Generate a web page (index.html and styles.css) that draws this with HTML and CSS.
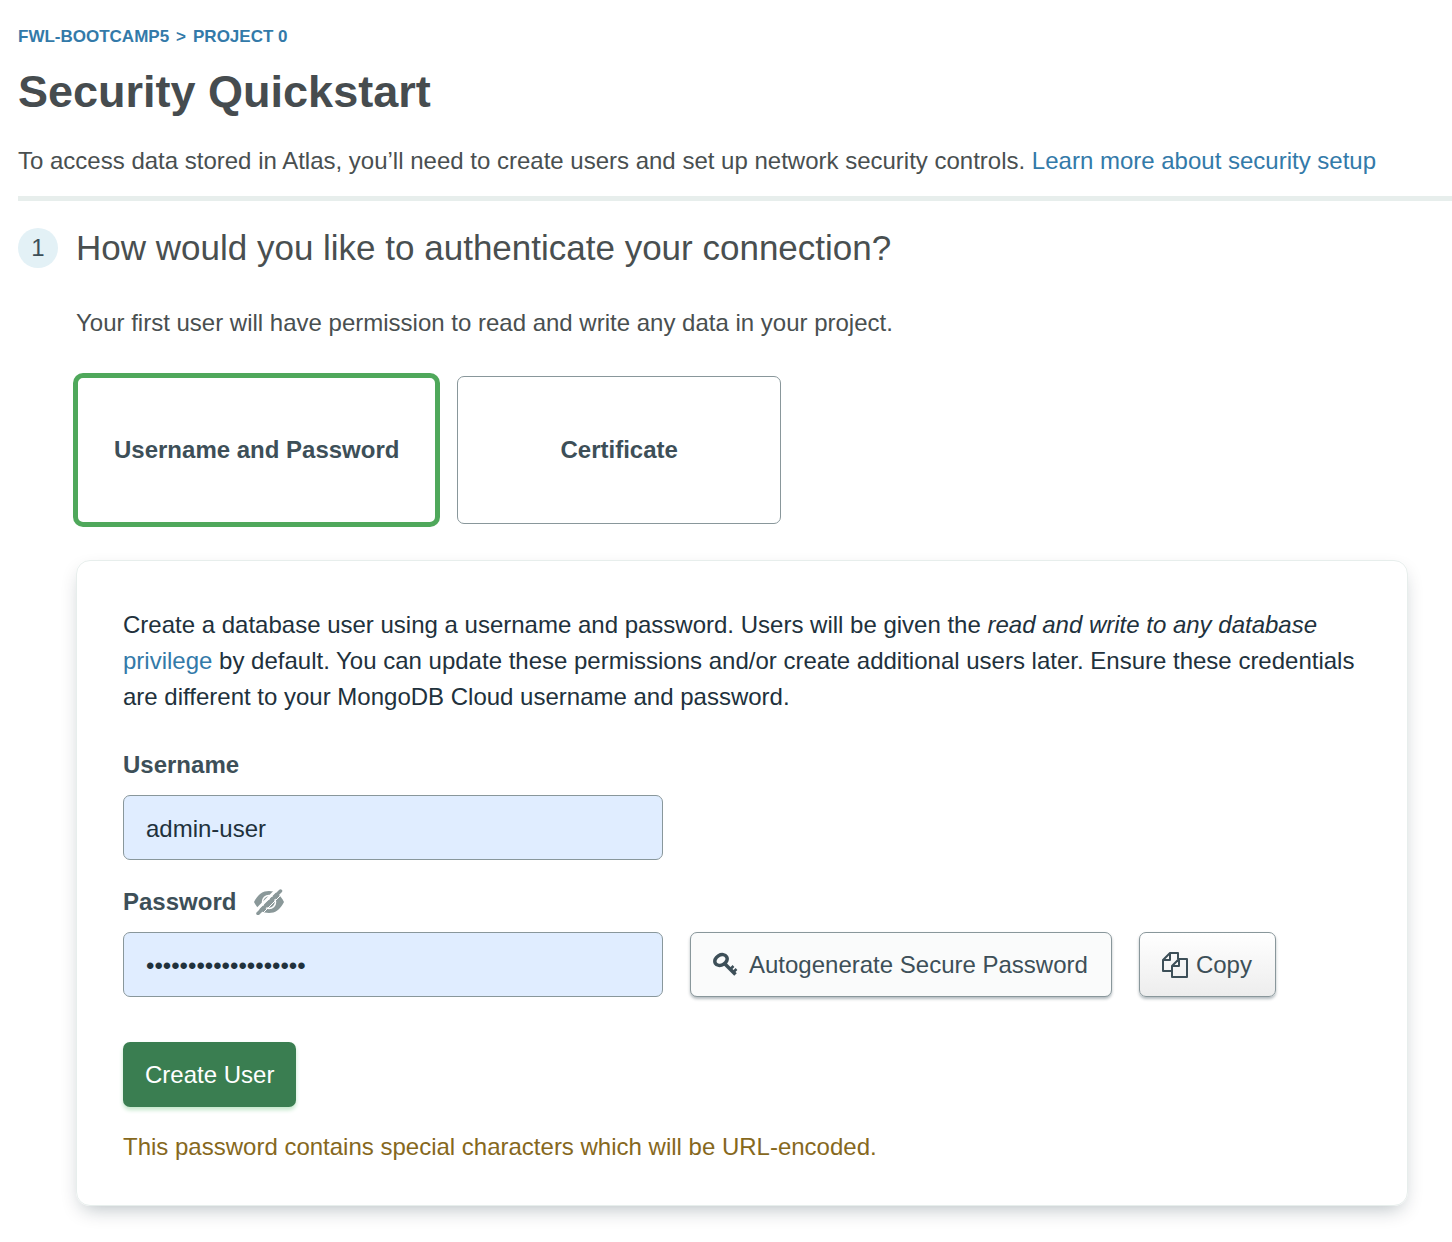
FILE: index.html
```html
<!DOCTYPE html>
<html lang="en">
<head>
<meta charset="utf-8">
<meta name="viewport" content="width=device-width, initial-scale=1">
<title>Security Quickstart</title>
<link rel="stylesheet" href="styles.css">
</head>
<body>
<header class="page-header">
  <nav class="breadcrumb" aria-label="Breadcrumb"><a href="#">FWL-BOOTCAMP5</a><span>&gt;</span><a href="#">PROJECT 0</a></nav>
  <h1 class="page-title">Security Quickstart</h1>
  <p class="intro">To access data stored in Atlas, you’ll need to create users and set up network security controls. <a href="#">Learn more about security setup</a></p>
</header>
<main class="step">
  <div class="step-heading">
    <span class="step-number">1</span>
    <h2 class="step-title">How would you like to authenticate your connection?</h2>
  </div>
  <div class="step-body">
    <p class="step-note">Your first user will have permission to read and write any data in your project.</p>
    <div class="methods">
      <button type="button" class="method method-selected" aria-pressed="true">Username and Password</button>
      <button type="button" class="method" aria-pressed="false">Certificate</button>
    </div>
    <form class="card">
      <p class="card-text">Create a database user using a username and password. Users will be given the <em>read and write to any database</em> <a href="#">privilege</a> by default. You can update these permissions and/or create additional users later. Ensure these credentials are different to your MongoDB Cloud username and password.</p>
      <label class="label" for="username">Username</label>
      <input class="field" id="username" type="text" value="admin-user">
      <div class="label-row">
        <label class="label" for="password">Password</label>
        <button type="button" class="reveal" aria-label="Show password">
          <svg width="30" height="26" viewBox="0 0 30 26" fill="none">
            <path d="M0 13C4 5 9 2 15 2S26 5 30 13C26 21 21 24 15 24S4 21 0 13Z" fill="#8a9899"/>
            <circle cx="15" cy="13" r="6.500" stroke="#fff" stroke-width="1.500"/>
            <path d="M12 12Q13 10 16 10" stroke="#fff" stroke-width="1.500"/>
            <path d="M0 23.500 23.500 0" stroke="#fff" stroke-width="3"/>
            <path d="M7 26 29.500 3.500" stroke="#fff" stroke-width="1"/>
            <path d="M4 24.500 26.500 2" stroke="#8a9899" stroke-width="3.500" stroke-linecap="round"/>
          </svg>
        </button>
      </div>
      <div class="password-row">
        <input class="field field-password" id="password" type="password" value="abcdefghijklmnopqrs">
        <button type="button" class="button">
          <svg width="26" height="26" viewBox="0 0 26 26" fill="none" stroke="#3d4f58">
            <ellipse cx="8" cy="8" rx="6.500" ry="5" transform="rotate(-30 8 8)" stroke-width="3.500"/>
            <path d="M11 11 22.500 22.500" stroke-width="3.500"/>
            <path d="M17.500 17 20.500 14M20.500 20 23.500 17" stroke-width="2.500"/>
          </svg>
          Autogenerate Secure Password
        </button>
        <button type="button" class="button button-copy">
          <svg width="26" height="26" viewBox="0 0 26 26" fill="none" stroke="#3d4f58" stroke-width="2" stroke-linejoin="round">
            <path d="M10 19H1V8L8 1H16V7M8 1V8H1"/>
            <path d="M17 7H25V25H10V14ZM17 7V14H10"/>
          </svg>
          Copy
        </button>
      </div>
      <button type="submit" class="create">Create User</button>
      <p class="warning">This password contains special characters which will be URL-encoded.</p>
    </form>
  </div>
</main>
</body>
</html>
```
FILE: styles.css
```css
* {
  box-sizing: border-box;
}

body {
  margin: 0;
  padding: 24px 0 36px 18px;
  background: #fff;
  color: #494f50;
  font-family: "Liberation Sans", Arial, sans-serif;
  font-size: 24px;
  line-height: 36px;
}

h1, h2, p {
  margin: 0;
}

a {
  color: #337aa9;
  text-decoration: none;
}

button, input {
  font: inherit;
}

button {
  cursor: pointer;
}

.page-header {
  padding-bottom: 17px;
  border-bottom: 5px solid #e7eeec;
}

.breadcrumb {
  display: flex;
  gap: 7px;
  color: #337aa9;
  font-size: 17px;
  font-weight: bold;
  line-height: 26px;
}

.page-title {
  margin: 12px 0 21px;
  color: #464c4f;
  font-size: 45px;
  line-height: 60px;
}

.intro {
  line-height: 36px;
}

.step {
  padding: 27px 44px 0 0;
}

.step-heading {
  display: flex;
  align-items: center;
  gap: 18px;
}

.step-number {
  flex: none;
  width: 40px;
  height: 40px;
  border-radius: 50%;
  background: #e3f1f6;
  color: #3d4f58;
  line-height: 40px;
  text-align: center;
}

.step-title {
  font-size: 35px;
  font-weight: normal;
  line-height: 40px;
}

.step-body {
  padding-left: 58px;
}

.step-note {
  margin: 37px 0 35px;
}

.methods {
  display: flex;
  gap: 20px;
}

.method {
  height: 148px;
  padding: 0 102px;
  border: 1px solid #89979b;
  border-radius: 7px;
  background: #fff;
  color: #3d4f58;
  font-weight: bold;
}

.method-selected {
  padding: 0 36px;
  border: 2px solid #4fa85b;
  box-shadow: 0 0 0 3px #4fa85b;
}

.card {
  display: flex;
  flex-direction: column;
  align-items: flex-start;
  margin-top: 36px;
  padding: 46px 46px 40px;
  border: 1px solid #e7eeec;
  border-radius: 14px;
  box-shadow: 0 8px 20px -6px rgba(0, 30, 43, 0.3);
}

.card-text {
  margin-bottom: 32px;
  color: #21313c;
}

.label {
  color: #3d4f58;
  font-weight: bold;
}

.field {
  width: 540px;
  height: 65px;
  margin-top: 12px;
  padding: 2px 22px 0;
  border: 1px solid #89979b;
  border-radius: 7px;
  background: #e0edff;
  color: #21313c;
}

.label-row {
  display: flex;
  align-items: center;
  gap: 18px;
  margin-top: 24px;
}

.reveal {
  display: flex;
  padding: 0;
  border: 0;
  background: none;
}

.password-row {
  display: flex;
  gap: 27px;
  margin-top: 12px;
}

.field-password {
  margin-top: 0;
}

.button {
  display: flex;
  align-items: center;
  gap: 10px;
  height: 65px;
  padding: 0 23px 0 22px;
  border: 1px solid #89979b;
  border-radius: 7px;
  background: #fafbfb;
  box-shadow: 0 2px 3px rgba(0, 30, 43, 0.3);
  color: #3d4f58;
  white-space: nowrap;
}

.button-copy {
  gap: 8px;
  background: linear-gradient(#fff, #ededed);
}

.create {
  height: 65px;
  margin-top: 45px;
  padding: 0 22px;
  border: 0;
  border-radius: 7px;
  background: #3a7e51;
  box-shadow: 0 3px 4px #c3e7ca;
  color: #fff;
}

.warning {
  margin-top: 22px;
  color: #86681d;
}
```
